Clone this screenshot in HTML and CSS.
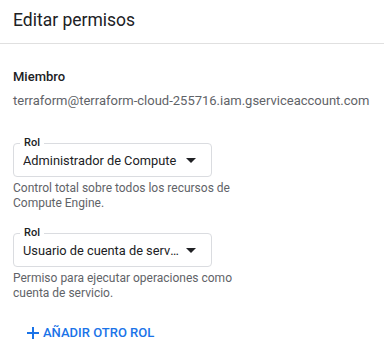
FILE: index.html
```html
<!DOCTYPE html>
<html lang="es">
<head>
  <meta charset="UTF-8" />
  <meta name="viewport" content="width=device-width, initial-scale=1.0" />
  <title>Editar permisos</title>
  <link rel="stylesheet" href="styles.css">
</head>
<body>
  <header class="panel-header">
    <h1>Editar permisos</h1>
  </header>

  <div class="panel-body">
    <div class="member">
      <h2>Miembro</h2>
      <div class="member-email">terraform@terraform-cloud-255716.iam.gserviceaccount.com</div>
    </div>

    <div class="role">
      <div class="role-field">
        <span class="role-label">Rol</span>
        <span class="role-value">Administrador de Compute</span>
        <span class="role-arrow"></span>
      </div>
      <p class="role-hint">Control total sobre todos los recursos de Compute Engine.</p>
    </div>

    <div class="role">
      <div class="role-field">
        <span class="role-label">Rol</span>
        <span class="role-value">Usuario de cuenta de servicio</span>
        <span class="role-arrow"></span>
      </div>
      <p class="role-hint">Permiso para ejecutar operaciones como cuenta de servicio.</p>
    </div>

    <button type="button" class="add-role">
      <svg width="12" height="12" viewBox="0 0 12 12"><path d="M5 0h2v5h5v2H7v5H5V7H0V5h5z" fill="currentColor"/></svg>
      AÑADIR OTRO ROL
    </button>
  </div>
</body>
</html>
```

FILE: styles.css
```css
/* General Styles */
body {
  font-family: Roboto, "Liberation Sans", Arial, sans-serif;
  margin: 0;
  padding: 0;
  background-color: #fff;
  color: #202124;
}

.panel-header {
  height: 43px;
  border-bottom: 1px solid #e0e0e0;
  padding: 0 13px;
  display: flex;
  align-items: center;
}

.panel-header h1 {
  margin: 0;
  font-size: 17.5px;
  font-weight: 400;
  padding-bottom: 3px;
}

.panel-body {
  padding: 24px 13px 0;
}

/* Member */
.member h2 {
  margin: 0;
  font-size: 13px;
  font-weight: 500;
  line-height: 18px;
}

.member-email {
  margin-top: 6px;
  font-size: 13px;
  line-height: 18px;
  color: #5f6368;
}

/* Role select */
.role {
  margin-top: 33px;
}

.role + .role {
  margin-top: 22px;
}

.role-field {
  position: relative;
  width: 199px;
  height: 34px;
  box-sizing: border-box;
  border: 1px solid #dadce0;
  border-radius: 4px;
  display: flex;
  align-items: center;
  padding: 0 15px 0 9px;
}

.role-label {
  position: absolute;
  top: -8px;
  left: 6px;
  padding: 0 4px;
  background-color: #fff;
  font-size: 11px;
  font-weight: 500;
  line-height: 14px;
}

.role-value {
  flex: 1;
  font-size: 12.8px;
  white-space: nowrap;
  overflow: hidden;
  text-overflow: ellipsis;
  padding-top: 1px;
}

.role-arrow {
  width: 0;
  height: 0;
  margin-left: 5px;
  border-left: 5px solid transparent;
  border-right: 5px solid transparent;
  border-top: 5px solid #202124;
}

.role-hint {
  margin: 4px 0 0;
  width: 225px;
  font-size: 12px;
  line-height: 15px;
  color: #5f6368;
}

/* Add button */
.add-role {
  margin: 24px 0 0 14px;
  padding: 0;
  border: none;
  background: none;
  display: flex;
  align-items: center;
  gap: 4px;
  font-family: inherit;
  font-size: 13px;
  font-weight: 500;
  line-height: 16px;
  color: #1a73e8;
  cursor: pointer;
}
```
